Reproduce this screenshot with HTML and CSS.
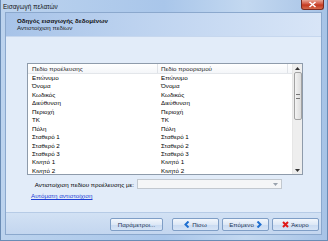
FILE: index.html
```html
<!DOCTYPE html>
<html lang="el">
<head>
    <meta charset="UTF-8">
    <title>Εισαγωγή πελατών</title>
    <link rel="stylesheet" href="styles.css">
</head>
<body>
    <div class="window">
        <div class="titlebar">
            <span class="title">Εισαγωγή πελατών</span>
            <div class="close-btn">
                <svg width="9" height="7" viewBox="0 0 9 7"><path d="M1.5 1 L7.5 6 M7.5 1 L1.5 6" stroke="#fff" stroke-width="1.6"/></svg>
            </div>
        </div>

        <div class="client">
            <div class="wizard-header">
                <div class="wizard-title">Οδηγός εισαγωγής δεδομένων</div>
                <div class="wizard-subtitle">Αντιστοίχιση πεδίων</div>
            </div>

            <div class="content">
                <div class="listbox">
                    <div class="list-main">
                        <div class="list-head">
                            <div class="col col-src">Πεδίο προέλευσης</div>
                            <div class="col col-dst">Πεδίο προορισμού</div>
                            <div class="col col-fill"></div>
                        </div>
                        <div class="list-rows">
                            <div class="row"><span class="col col-src">Επώνυμο</span><span class="col col-dst">Επώνυμο</span></div>
                            <div class="row"><span class="col col-src">Όνομα</span><span class="col col-dst">Όνομα</span></div>
                            <div class="row"><span class="col col-src">Κωδικός</span><span class="col col-dst">Κωδικός</span></div>
                            <div class="row"><span class="col col-src">Διεύθυνση</span><span class="col col-dst">Διεύθυνση</span></div>
                            <div class="row"><span class="col col-src">Περιοχή</span><span class="col col-dst">Περιοχή</span></div>
                            <div class="row"><span class="col col-src">ΤΚ</span><span class="col col-dst">ΤΚ</span></div>
                            <div class="row"><span class="col col-src">Πόλη</span><span class="col col-dst">Πόλη</span></div>
                            <div class="row"><span class="col col-src">Σταθερό 1</span><span class="col col-dst">Σταθερό 1</span></div>
                            <div class="row"><span class="col col-src">Σταθερό 2</span><span class="col col-dst">Σταθερό 2</span></div>
                            <div class="row"><span class="col col-src">Σταθερό 3</span><span class="col col-dst">Σταθερό 3</span></div>
                            <div class="row"><span class="col col-src">Κινητό 1</span><span class="col col-dst">Κινητό 1</span></div>
                            <div class="row"><span class="col col-src">Κινητό 2</span><span class="col col-dst">Κινητό 2</span></div>
                        </div>
                    </div>
                    <div class="scrollbar">
                        <div class="sb-arrow">
                            <svg width="5" height="3" viewBox="0 0 5 3"><path d="M0 3 L2.5 0 L5 3 Z" fill="#333"/></svg>
                        </div>
                        <div class="sb-thumb"><span class="grip"></span></div>
                        <div class="sb-track"></div>
                        <div class="sb-arrow">
                            <svg width="5" height="3" viewBox="0 0 5 3"><path d="M0 0 L2.5 3 L5 0 Z" fill="#333"/></svg>
                        </div>
                    </div>
                </div>

                <div class="match-row">
                    <label class="match-label">Αντιστοίχιση πεδίου προέλευσης με:</label>
                    <div class="combo">
                        <svg width="5" height="3" viewBox="0 0 5 3"><path d="M0 0 L2.5 3 L5 0 Z" fill="#9aa3ad"/></svg>
                    </div>
                </div>

                <a class="auto-link" href="#">Αυτόματη αντιστοίχιση</a>
            </div>

            <div class="footer">
                <button class="btn btn-params">Παράμετροι...</button>
                <button class="btn btn-back">
                    <svg width="6" height="7" viewBox="0 0 6 7"><path d="M4.5 0.5 L1.5 3.5 L4.5 6.5" fill="none" stroke="#1f6fd0" stroke-width="2"/></svg>
                    Πίσω
                </button>
                <button class="btn btn-next">
                    Επόμενο
                    <svg width="6" height="7" viewBox="0 0 6 7"><path d="M1.5 0.5 L4.5 3.5 L1.5 6.5" fill="none" stroke="#1f6fd0" stroke-width="2"/></svg>
                </button>
                <button class="btn btn-cancel">
                    <svg width="7" height="7" viewBox="0 0 7 7"><path d="M1 1 L6 6 M6 1 L1 6" stroke="#e01818" stroke-width="2"/></svg>
                    Άκυρο
                </button>
            </div>
        </div>
    </div>
</body>
</html>
```

FILE: styles.css
```css
body {
    margin: 0;
    padding: 0;
    font-family: "Liberation Sans", Arial, sans-serif;
    font-size: 6.2px;
    color: #000;
    background-color: #fff;
}

.window {
    width: 328px;
    height: 241px;
    box-sizing: border-box;
    display: flex;
    flex-direction: column;
    padding: 0 5px 5px 4px;
    background: linear-gradient(to right, #bcd3ee 0%, #a9c6ea 50%, #c3d8f0 75%, #a7c3e6 100%);
    border: 1px solid #6a8cb5;
    border-top: none;
}

/* title bar */
.titlebar {
    height: 12px;
    display: flex;
    align-items: center;
    justify-content: space-between;
    flex-shrink: 0;
}

.title {
    font-size: 6.4px;
    color: #111;
    margin-left: -2px;
    margin-top: 1px;
}

.close-btn {
    width: 23px;
    height: 10px;
    margin-top: -2px;
    margin-right: -2px;
    display: flex;
    align-items: center;
    justify-content: center;
    background: linear-gradient(#e8a696 0%, #d2553f 45%, #c2381f 55%, #d66a4c 100%);
    border: 1px solid #7a2a20;
    border-top: none;
    border-radius: 0 0 3px 3px;
    box-sizing: border-box;
}

/* client area */
.client {
    flex: 1;
    display: flex;
    flex-direction: column;
    background-color: #e2ecf9;
    border: 1px solid #8ba8cd;
}

.wizard-header {
    height: 24px;
    padding: 4px 0 0 11px;
    box-sizing: border-box;
    background: linear-gradient(to right, #a7c3e8 0%, #bcd2ef 40%, #d8e5f7 100%);
    border-bottom: 1px solid #c6d7ee;
}

.wizard-title {
    font-weight: bold;
    line-height: 7px;
    color: #111;
}

.wizard-subtitle {
    line-height: 7px;
    color: #1a1a1a;
}

.content {
    flex: 1;
    padding: 26px 0 0 21px;
}

/* list with columns */
.listbox {
    width: 276px;
    height: 112px;
    box-sizing: border-box;
    display: flex;
    background-color: #fff;
    border: 1px solid #8e9bab;
}

.list-main {
    flex: 1;
    overflow: hidden;
}

.list-head {
    height: 10px;
    display: flex;
    align-items: center;
    box-sizing: border-box;
    border-bottom: 1px solid #e3e6ea;
    background: linear-gradient(#fff, #f4f6f9);
    color: #1e1e1e;
}

.list-head .col {
    height: 100%;
    display: flex;
    align-items: center;
    box-sizing: border-box;
    border-right: 1px solid #e0e3e8;
}

.list-head .col-fill {
    flex: 1;
    border-right: none;
}

.col-src {
    width: 130px;
    padding-left: 4px;
    box-sizing: border-box;
}

.col-dst {
    width: 130px;
    padding-left: 3px;
    box-sizing: border-box;
}

.row {
    height: 8.45px;
    display: flex;
    align-items: center;
}

.row .col {
    display: block;
    line-height: 8.45px;
}

/* scrollbar */
.scrollbar {
    width: 9px;
    display: flex;
    flex-direction: column;
    background-color: #eeeeee;
    border-left: 1px solid #e6e6e6;
}

.sb-arrow {
    height: 8px;
    display: flex;
    align-items: center;
    justify-content: center;
}

.sb-thumb {
    height: 46px;
    margin: 0 0.5px;
    display: flex;
    align-items: center;
    justify-content: center;
    background: linear-gradient(to right, #f3f3f3, #dcdcdc);
    border: 1px solid #a3a3a3;
    border-radius: 2px;
}

.grip {
    width: 4px;
    height: 3px;
    border-top: 1px solid #777;
    border-bottom: 1px solid #777;
}

.sb-track {
    flex: 1;
}

/* combo row */
.match-row {
    display: flex;
    align-items: center;
    margin-top: 4px;
    height: 10px;
}

.match-label {
    width: 110px;
    text-align: right;
    padding-right: 3px;
    box-sizing: border-box;
}

.combo {
    width: 145px;
    height: 10px;
    box-sizing: border-box;
    display: flex;
    align-items: center;
    justify-content: flex-end;
    padding-right: 3px;
    background-color: #f5f6f7;
    border: 1px solid #c2c8cf;
}

.auto-link {
    display: inline-block;
    margin: 3px 0 0 4px;
    color: #1f3fd6;
    text-decoration: underline;
    line-height: 8px;
}

/* footer with buttons */
.footer {
    height: 22px;
    display: flex;
    align-items: flex-start;
    justify-content: flex-end;
    gap: 3px;
    padding: 5px 2px 0 0;
    box-sizing: border-box;
    background: linear-gradient(#d2e1f4, #c3d6ef);
    border-top: 1px solid #b6cbe6;
}

.btn {
    height: 13px;
    padding: 0;
    display: flex;
    align-items: center;
    justify-content: center;
    gap: 2px;
    font-family: "Liberation Sans", Arial, sans-serif;
    font-size: 6.2px;
    color: #1d3557;
    background: linear-gradient(#f2f6fc 0%, #dde8f6 50%, #c9daf1 51%, #d6e4f6 100%);
    border: 1px solid #7f9ec6;
    border-radius: 2px;
    box-sizing: border-box;
}

.btn-params {
    width: 53px;
    margin-right: 6px;
}

.btn-back,
.btn-next,
.btn-cancel {
    width: 47px;
}
```
